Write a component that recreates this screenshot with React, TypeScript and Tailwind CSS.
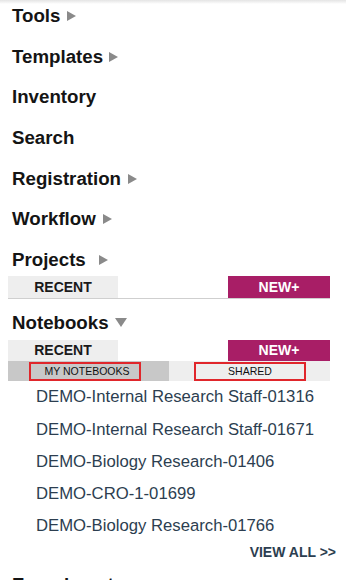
import React from 'react'

const font = { fontFamily: '"Liberation Sans", Arial, sans-serif' }

const RightArrow = () => (
  <svg width="9" height="10" viewBox="0 0 9 10" className="inline-block">
    <polygon points="0,0 9,5 0,10" fill="#8a8a8a" />
  </svg>
)

const DownArrow = () => (
  <svg width="12" height="9" viewBox="0 0 12 9" className="inline-block">
    <polygon points="0,0 12,0 6,9" fill="#8a8a8a" />
  </svg>
)

const notebooks = [
  'DEMO-Internal Research Staff-01316',
  'DEMO-Internal Research Staff-01671',
  'DEMO-Biology Research-01406',
  'DEMO-CRO-1-01699',
  'DEMO-Biology Research-01766',
]

const Heading = ({ label, arrow, gap = 'ml-[7px]', className = 'h-[40.67px]' }: { label: string; arrow?: 'right' | 'down'; gap?: string; className?: string }) => (
  <div className={`${className} pl-[12px] flex items-start`}>
    <span className="text-[18.7px] leading-[24px] font-bold text-[#141414] flex items-center">
      {label}
      {arrow && (
        <span className={`${gap} flex items-center`}>{arrow === 'right' ? <RightArrow /> : <DownArrow />}</span>
      )}
    </span>
  </div>
)

const RecentBar = ({ line }: { line?: boolean }) => (
  <div className={`mx-[8px] w-[322px] flex h-[21.5px] ${line ? 'border-b border-[#cfcfcf] box-content' : ''}`}>
    <div className="w-[110px] bg-[#eeeeee] flex items-center justify-center text-[14px] font-bold text-[#1a1a1a]">RECENT</div>
    <div className="flex-1" />
    <div className="w-[102px] bg-[#a81e66] flex items-center justify-center text-[14px] font-bold text-white">NEW+</div>
  </div>
)

export default function App() {
  return (
    <div className="w-[346px] h-[580px] overflow-hidden bg-white" style={font}>
      <div className="h-[4px] bg-gradient-to-b from-[#e4e4e4] to-white" />
      <Heading label="Tools" arrow="right" />
      <Heading label="Templates" arrow="right" gap="ml-[6px]" />
      <Heading label="Inventory" />
      <Heading label="Search" />
      <Heading label="Registration" arrow="right" />
      <Heading label="Workflow" arrow="right" />
      <Heading label="Projects" arrow="right" gap="ml-[13px]" className="h-[28.5px]" />
      <RecentBar line />
      <div className="h-[11.8px]" />
      <Heading label="Notebooks" arrow="down" gap="ml-[6px]" className="h-[29.2px]" />
      <RecentBar />
      <div className="mx-[8px] w-[322px] flex h-[20px] text-[10.5px] text-[#111]">
        <div className="w-[161px] bg-[#c8c8c8] flex items-center">
          <div className="ml-[21px] w-[112px] h-[19px] border-2 border-[#e0262b] flex items-center justify-center pl-[4px]">MY NOTEBOOKS</div>
        </div>
        <div className="w-[161px] bg-[#eeeeee] flex items-center">
          <div className="ml-[25px] w-[112px] h-[19px] border-2 border-[#e0262b] flex items-center justify-center">SHARED</div>
        </div>
      </div>
      <ul className="pl-[36px]">
        {notebooks.map((n, i) => (
          <li key={i} className="h-[32.1px] leading-[32.1px] text-[16.7px] text-[#2c3e50] whitespace-nowrap">{n}</li>
        ))}
      </ul>
      <div className="pr-[10px] text-right text-[14px] leading-[20px] font-bold text-[#2c3e50]">VIEW ALL &gt;&gt;</div>
      <div className="h-[11px]" />
      <Heading label="Experiments" arrow="right" />
    </div>
  )
}
